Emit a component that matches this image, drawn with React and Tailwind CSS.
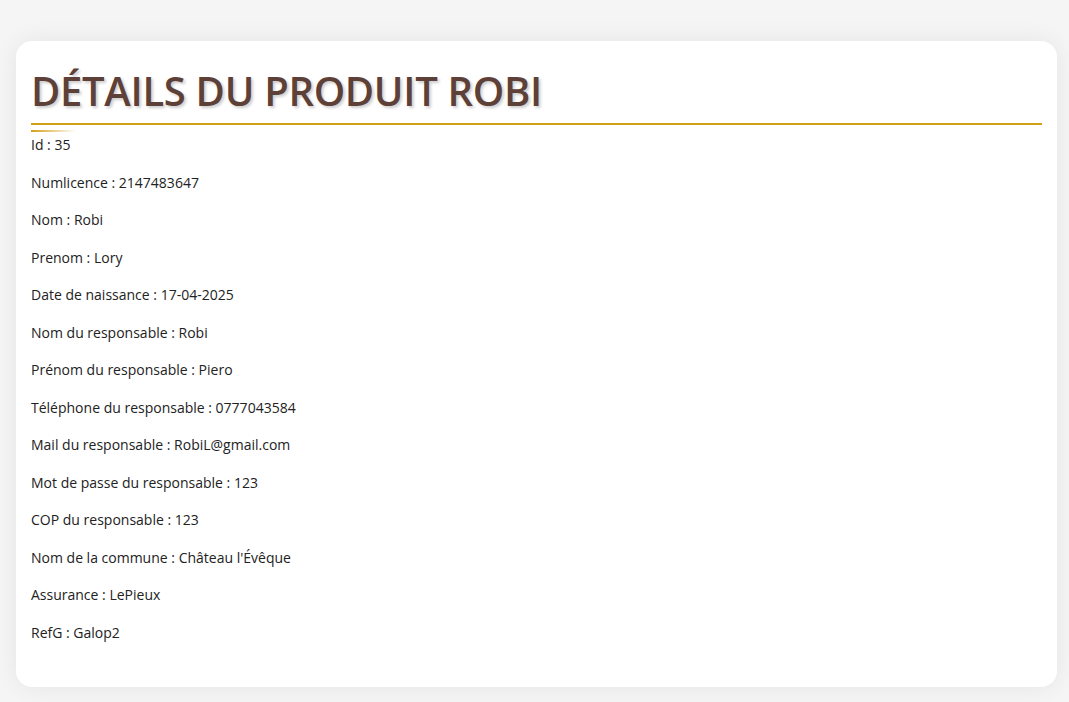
export default function App() {
  const rows = [
    ["Id", "35"],
    ["Numlicence", "2147483647"],
    ["Nom", "Robi"],
    ["Prenom", "Lory"],
    ["Date de naissance", "17-04-2025"],
    ["Nom du responsable", "Robi"],
    ["Prénom du responsable", "Piero"],
    ["Téléphone du responsable", "0777043584"],
    ["Mail du responsable", "RobiL@gmail.com"],
    ["Mot de passe du responsable", "123"],
    ["COP du responsable", "123"],
    ["Nom de la commune", "Château l'Évêque"],
    ["Assurance", "LePieux"],
    ["RefG", "Galop2"],
  ];
  return (
    <div className="min-h-screen bg-[#f5f5f5] pt-[41px] pb-[16px] pl-[16px] pr-[12px] font-['Open_Sans',sans-serif]">
      <div className="bg-white rounded-[16px] shadow-[0_0_24px_rgba(0,0,0,0.07)] px-[14px] pt-[26px] pb-[44px]">
        <h1 className="text-[40px] leading-[48px] font-semibold text-[#5d4037] tracking-[-0.3px] uppercase pb-[8px] border-b-2 border-[#d4a017] [text-shadow:2px_2px_3px_rgba(0,0,0,0.2)] mx-px">
          Détails du produit Robi
        </h1>
        <div className="mx-px mt-[5px] h-[2px] w-[45px] bg-gradient-to-r from-[#d4a017] to-transparent" />
        <div className="mx-px mt-[2px] text-[14px] leading-[21.5px] text-[#222] flex flex-col gap-[16px]">
          {rows.map(([k, v]) => (
            <p key={k}>
              {k} : {v}
            </p>
          ))}
        </div>
      </div>
    </div>
  );
}
